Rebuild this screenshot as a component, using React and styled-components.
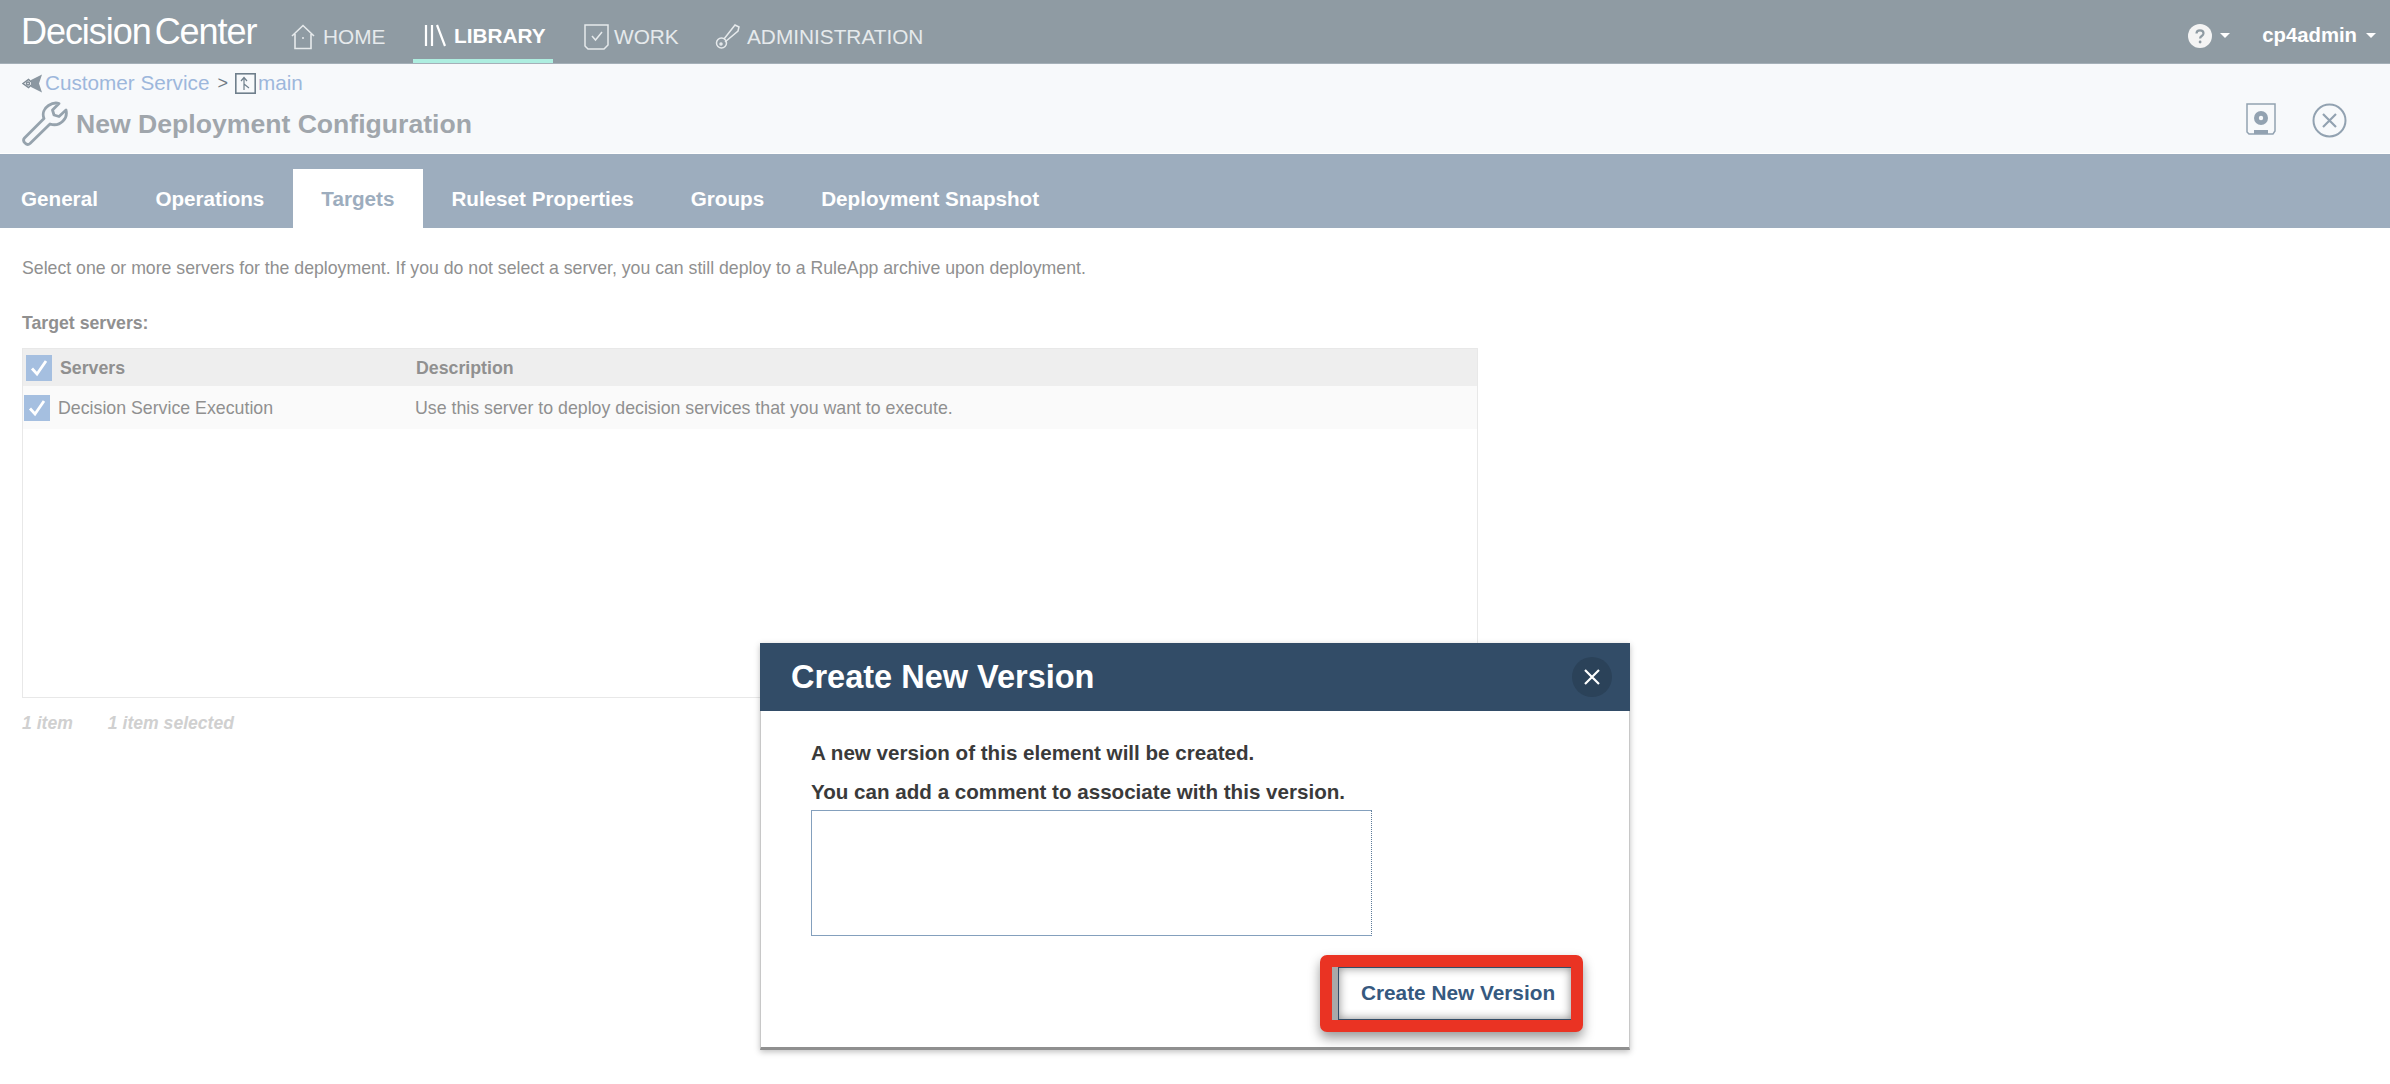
import React from "react";
import styled, { createGlobalStyle } from "styled-components";

const GlobalStyle = createGlobalStyle`
  html, body { margin: 0; padding: 0; background: #fff; }
  body { font-family: "Liberation Sans", Arial, sans-serif; }
  * { box-sizing: border-box; }
`;

const Page = styled.div`
  position: relative;
  width: 2390px;
  height: 1084px;
  overflow: hidden;
  background: #fff;
`;

const TopBar = styled.header`
  height: 64px;
  background: #8f9ba3;
  border-bottom: 1px solid #a5b0b8;
  display: flex;
  align-items: stretch;
  padding: 0 14px 0 21px;
  color: #fff;
`;
const Brand = styled.div`
  font-size: 36px;
  line-height: 64px;
  letter-spacing: -1.05px;
  color: #fff;
  width: 270px;
  white-space: nowrap;
  span { margin-left: 4px; }
`;
const NavItem = styled.div`
  display: flex;
  align-items: center;
  gap: ${(p) => p.$gap}px;
  width: ${(p) => p.$width}px;
  height: 63px;
  padding: ${(p) => (p.$active ? 13 : 10)}px 0 0 ${(p) => p.$pad || 0}px;
  font-size: 20.800px;
  font-weight: ${(p) => (p.$active ? 700 : 400)};
  color: ${(p) => (p.$active ? "#fff" : "#e6eaec")};
  border-bottom: ${(p) => (p.$active ? "4px solid #aeeee0" : "none")};
`;
const TopRight = styled.div`
  margin-left: auto;
  display: flex;
  align-items: center;
  color: #fff;
  font-size: 20.300px;
  font-weight: 700;
  padding-top: 8px;
`;
const Caret = styled.i`
  display: block;
  width: 0;
  height: 0;
  border-left: 5px solid transparent;
  border-right: 5px solid transparent;
  border-top: 5px solid #fff;
  margin: 0 ${(p) => p.$right || 0}px 0 ${(p) => p.$left || 0}px;
`;

const SubHeader = styled.section`
  height: 90px;
  background: #f7f9fb;
  border-bottom: 1px solid #fff;
  padding: 7px 43px 0 22px;
  display: flex;
  justify-content: space-between;
`;
const Crumbs = styled.div`
  display: flex;
  align-items: center;
  height: 24px;
  font-size: 20.700px;
  color: #9db7dc;
`;
const CrumbIcon = styled.span`
  display: flex;
  margin-right: 2px;
`;
const Sep = styled.span`
  color: #6f7b85;
  font-size: 18px;
  margin: 0 7px 0 8px;
`;
const TitleRow = styled.div`
  display: flex;
  align-items: center;
  gap: 8px;
  margin-top: 5px;
`;
const Title = styled.h1`
  margin: 2px 0 0;
  font-size: 26.600px;
  font-weight: 700;
  color: #a0a6ac;
`;
const Actions = styled.div`
  display: flex;
  align-items: flex-start;
  gap: 36px;
  padding-top: 32px;
`;

const TabBar = styled.nav`
  height: 74px;
  background: #9dadbe;
  padding: 15px 0 0 0;
  display: flex;
  align-items: stretch;
`;
const Tab = styled.div`
  height: 59px;
  padding: 0 28.500px;
  display: flex;
  align-items: center;
  font-size: 20.650px;
  font-weight: 700;
  color: ${(p) => (p.$active ? "#9dadbe" : "#fff")};
  background: ${(p) => (p.$active ? "#fff" : "transparent")};
  &:first-child { padding: 0 29px 0 21px; }
`;

const Content = styled.main`
  padding: 28px 22px 0;
`;
const Lead = styled.p`
  margin: 0;
  font-size: 17.700px;
  line-height: 24px;
  color: #909090;
`;
const SectionLabel = styled.div`
  margin-top: 31px;
  font-size: 17.700px;
  line-height: 24px;
  font-weight: 700;
  color: #909090;
`;
const TableBox = styled.div`
  margin-top: 13px;
  width: 1456px;
  height: 350px;
  border: 1px solid #e8e8e8;
`;
const Row = styled.div`
  display: grid;
  grid-template-columns: 392px 1fr;
  align-items: center;
  font-size: 17.750px;
  color: #909090;
  height: ${(p) => (p.$head ? 37 : 43)}px;
  padding-top: 1px;
  background: ${(p) => (p.$head ? "#eeeeee" : "#fafafa")};
  font-weight: ${(p) => (p.$head ? 700 : 400)};
`;
const Cell = styled.div`
  display: flex;
  align-items: center;
  gap: 8px;
  padding-left: ${(p) => p.$pad || 0}px;
  white-space: nowrap;
`;
const Check = styled.span`
  width: 26px;
  height: 26px;
  background: #a5bfe0;
  display: flex;
  align-items: center;
  justify-content: center;
`;
const Counts = styled.div`
  margin-top: 15px;
  display: flex;
  gap: 35px;
  font-size: 17.600px;
  font-weight: 700;
  font-style: italic;
  color: #d0d0d0;
`;

/* the dialog floats over the page */
const Dialog = styled.div`
  position: absolute;
  left: 760px;
  top: 643px;
  width: 870px;
  height: 407px;
  background: #fff;
  border: 1px solid #c8c8c8;
  border-bottom: 3px solid #8f8f8f;
  box-shadow: 0 2px 6px rgba(0, 0, 0, 0.25);
`;
const DialogHead = styled.div`
  height: 68px;
  margin: -1px -1px 0;
  background: #324c67;
  display: flex;
  align-items: center;
  justify-content: space-between;
  padding: 0 18px 0 31px;
`;
const DialogTitle = styled.h2`
  margin: 0;
  font-size: 32.500px;
  font-weight: 700;
  color: #fff;
`;
const CloseBtn = styled.button`
  width: 40px;
  height: 40px;
  border: 0;
  border-radius: 50%;
  padding: 0;
  background: #2b4259;
  display: flex;
  align-items: center;
  justify-content: center;
`;
const DialogBody = styled.div`
  padding: 30px 0 0 50px;
`;
const DialogText = styled.p`
  margin: 0 0 ${(p) => p.$gap || 0}px;
  font-size: 20.600px;
  line-height: 24px;
  font-weight: 700;
  color: #3a3a3a;
`;
const CommentBox = styled.textarea`
  display: block;
  margin-top: 6px;
  width: 561px;
  height: 126px;
  border: 1px solid #84a0bd;
  border-right: 1px dotted #5c7a98;
  background: #fff;
  resize: none;
  outline: none;
`;
const DialogFooter = styled.div`
  display: flex;
  justify-content: flex-end;
  padding: 19px 46px 0 0;
`;
const Highlight = styled.div`
  width: 263px;
  height: 77px;
  border: 12px solid #ea3323;
  border-radius: 7px;
  box-shadow: 0 6px 12px rgba(0, 0, 0, 0.4);
  background: #a9a9a9;
  background-clip: padding-box;
  display: flex;
  align-items: stretch;
  padding-left: 6px;
`;
const PrimaryBtn = styled.button`
  flex: 1;
  border: 0;
  border-left: 1px solid #324c67;
  border-top: 1px solid #324c67;
  border-bottom: 1px solid #324c67;
  background: #fff;
  box-shadow: inset 0 0 10px rgba(0, 0, 0, 0.45);
  font-family: inherit;
  font-size: 20.800px;
  font-weight: 700;
  color: #36597f;
  padding: 0 0 2px 6px;
  text-align: center;
`;

const HomeIcon = () => (
  <svg width="24" height="26" viewBox="0 0 24 26" fill="none" stroke="#e6eaec" strokeWidth="1.6">
    <path d="M1 12 12 1.500 23 12M4 10v14.500h16V10" />
    <circle cx="12" cy="14" r="1" fill="#e6eaec" stroke="none" />
  </svg>
);
const LibraryIcon = () => (
  <svg width="22" height="26" viewBox="0 0 22 26" fill="none" stroke="#fff" strokeWidth="2.200">
    <path d="M2 2v21M8 2v21M13 2l8 21" />
  </svg>
);
const WorkIcon = () => (
  <svg width="26" height="26" viewBox="0 0 26 26" fill="none" stroke="#e6eaec" strokeWidth="1.500">
    <path d="M1 1h23v20l-4 4H4l-3-3z" />
    <path d="M8 12l3.500 4L18 8" />
  </svg>
);
const KeyIcon = () => (
  <svg width="26" height="26" viewBox="0 0 26 26" fill="none" stroke="#e6eaec" strokeWidth="1.500">
    <circle cx="6.500" cy="19" r="5" />
    <circle cx="6" cy="20" r="1" />
    <path d="M9 15 20 1l4 2-1 4-13 11" />
  </svg>
);
const HelpIcon = () => (
  <svg width="24" height="24" viewBox="0 0 24 24">
    <circle cx="12" cy="12" r="12" fill="#f4f4f4" />
    <path d="M8.500 9.500c0-2 1.500-3.200 3.500-3.200s3.500 1.200 3.500 3c0 2.800-3.400 2.600-3.400 5.200" fill="none" stroke="#8f9ba3" strokeWidth="2.200" />
    <circle cx="12.100" cy="18" r="1.400" fill="#8f9ba3" />
  </svg>
);
const BranchGlyph = () => (
  <svg width="21" height="21" viewBox="0 0 21 21" fill="none" stroke="#7f8b95" strokeWidth="1.500">
    <path d="M1 10.500 6.500 6.500 11 10.500 6.500 14.500z" />
    <path d="M20 1.500 9 7v7l11 5.500-3-9z" fill="#8b97a1" stroke="none" />
    <circle cx="6" cy="10.500" r="1.500" fill="#f7f9fb" />
  </svg>
);
const MainGlyph = () => (
  <svg width="21" height="21" viewBox="0 0 21 21" fill="none" stroke="#6f7f8c" strokeWidth="1.200">
    <rect x="0.800" y="0.800" width="19.400" height="19.400" strokeWidth="1.600" />
    <path d="M9 17V5M6 8l3-3.500L12 8M9 11l5 4" />
  </svg>
);
const WrenchIcon = () => (
  <svg width="46" height="46" viewBox="0 0 46 46" fill="none" stroke="#96a3ad" strokeWidth="2.800" strokeLinejoin="round">
    <path d="M2.500 38 22 18.500c-2-5 0-10 4.500-13C30 3.200 34 2.500 37 3.500L30.500 10l1.500 5 5 1.500L44 10c1 4 0 8-3 11-3.500 3.500-8.500 4.500-13 3L8 43.500c-1.500 1.300-3.500 1-5-.5-1.500-1.500-1.800-3.500-.5-5z" />
  </svg>
);
const DiskIcon = () => (
  <svg width="30" height="32" viewBox="0 0 30 32" fill="none">
    <path d="M1 1h28v27l-2 3H3l-2-2z" stroke="#92a2b1" strokeWidth="1.500" fill="#f7f9fb" />
    <circle cx="15" cy="15" r="7" fill="#92a2b1" />
    <circle cx="15" cy="15" r="2.200" fill="#f7f9fb" />
    <rect x="8" y="27" width="14" height="4" fill="#92a2b1" />
  </svg>
);
const CircleX = () => (
  <svg width="35" height="35" viewBox="0 0 35 35" fill="none" stroke="#92a2b1" strokeWidth="2">
    <circle cx="17.500" cy="17.500" r="16" />
    <path d="M11 11l13 13M24 11 11 24" strokeWidth="2.200" />
  </svg>
);
const Tick = () => (
  <svg width="20" height="20" viewBox="0 0 20 20" fill="none" stroke="#fff" strokeWidth="2.800">
    <path d="M3 10.500 8 16 17 3" />
  </svg>
);
const CloseGlyph = () => (
  <svg width="18" height="18" viewBox="0 0 18 18" fill="none" stroke="#fff" strokeWidth="2.200">
    <path d="M2 2l14 14M16 2 2 16" />
  </svg>
);

const tabs = ["General", "Operations", "Targets", "Ruleset Properties", "Groups", "Deployment Snapshot"];

const App = () => {
  return (
    <>
      <GlobalStyle />
      <Page>
        <TopBar>
          <Brand>
            Decision<span>Center</span>
          </Brand>
          <NavItem $width={122} $gap={8}>
            <HomeIcon />
            HOME
          </NavItem>
          <NavItem $width={140} $pad={11} $gap={8} $active>
            <LibraryIcon />
            LIBRARY
          </NavItem>
          <NavItem $width={162} $pad={31} $gap={4}>
            <WorkIcon />
            WORK
          </NavItem>
          <NavItem $width={240} $gap={6}>
            <KeyIcon />
            ADMINISTRATION
          </NavItem>
          <TopRight>
            <HelpIcon />
            <Caret $left={8} $right={32} />
            cp4admin
            <Caret $left={9} />
          </TopRight>
        </TopBar>

        <SubHeader>
          <div>
            <Crumbs>
              <CrumbIcon>
                <BranchGlyph />
              </CrumbIcon>
              Customer Service
              <Sep>&gt;</Sep>
              <CrumbIcon>
                <MainGlyph />
              </CrumbIcon>
              main
            </Crumbs>
            <TitleRow>
              <WrenchIcon />
              <Title>New Deployment Configuration</Title>
            </TitleRow>
          </div>
          <Actions>
            <DiskIcon />
            <CircleX />
          </Actions>
        </SubHeader>

        <TabBar>
          {tabs.map((t) => (
            <Tab key={t} $active={t === "Targets"}>
              {t}
            </Tab>
          ))}
        </TabBar>

        <Content>
          <Lead>
            Select one or more servers for the deployment. If you do not select a server, you can still deploy to a RuleApp archive upon deployment.
          </Lead>
          <SectionLabel>Target servers:</SectionLabel>
          <TableBox>
            <Row $head>
              <Cell $pad={3}>
                <Check>
                  <Tick />
                </Check>
                Servers
              </Cell>
              <Cell $pad={1}>Description</Cell>
            </Row>
            <Row>
              <Cell $pad={1}>
                <Check>
                  <Tick />
                </Check>
                Decision Service Execution
              </Cell>
              <Cell>Use this server to deploy decision services that you want to execute.</Cell>
            </Row>
          </TableBox>
          <Counts>
            <span>1 item</span>
            <span>1 item selected</span>
          </Counts>
        </Content>

        <Dialog>
          <DialogHead>
            <DialogTitle>Create New Version</DialogTitle>
            <CloseBtn aria-label="Close">
              <CloseGlyph />
            </CloseBtn>
          </DialogHead>
          <DialogBody>
            <DialogText $gap={15}>A new version of this element will be created.</DialogText>
            <DialogText>You can add a comment to associate with this version.</DialogText>
            <CommentBox />
            <DialogFooter>
              <Highlight>
                <PrimaryBtn>Create New Version</PrimaryBtn>
              </Highlight>
            </DialogFooter>
          </DialogBody>
        </Dialog>
      </Page>
    </>
  );
};

export default App;
